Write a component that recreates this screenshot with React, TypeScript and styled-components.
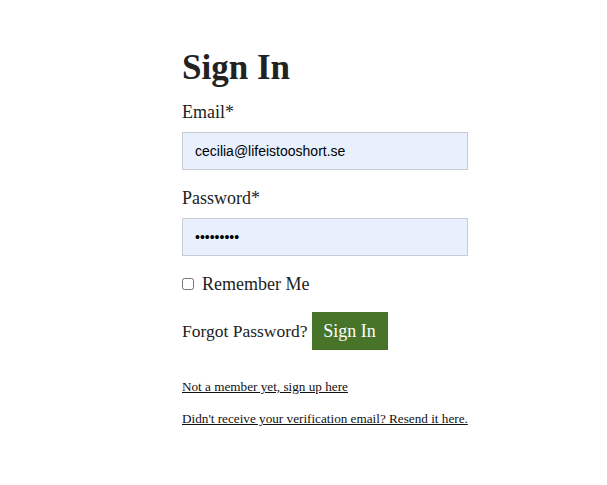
import React from "react";
import styled, { createGlobalStyle } from "styled-components";

const Global = createGlobalStyle`
  html, body { margin: 0; padding: 0; background: #fff; }
  body { font-family: "Liberation Serif", "DejaVu Serif", serif; color: #222; }
`;

const Page = styled.div`
  padding: 46px 0 0 182px;
`;

const Form = styled.form`
  width: 286px;
  display: flex;
  flex-direction: column;
`;

const Title = styled.h1`
  margin: 0 0 11px;
  font-size: 35px;
  font-weight: 700;
  line-height: 44px;
  color: #222;
`;

const Label = styled.label`
  font-size: 18px;
  line-height: 22px;
  margin-bottom: 9px;
  color: #222;
`;

const Input = styled.input`
  box-sizing: border-box;
  width: 286px;
  height: 38px;
  padding: 0 12px;
  border: 1px solid #c9ccd4;
  background: #e8f0fe;
  font-family: "Liberation Sans", Arial, sans-serif;
  font-size: 14px;
  color: #000;
  margin-bottom: 17px;
  outline: none;
`;

const CheckRow = styled.label`
  display: flex;
  align-items: center;
  gap: 8px;
  font-size: 18px;
  line-height: 22px;
  margin-top: 0;
`;

const Box = styled.input`
  margin: 0;
  width: 12px;
  height: 12px;
`;

const ActionRow = styled.div`
  display: flex;
  align-items: center;
  gap: 4px;
  margin-top: 17px;
  font-size: 17.5px;
`;

const Button = styled.button`
  background: #477429;
  color: #fff;
  border: none;
  width: 76px;
  height: 38px;
  font-family: inherit;
  font-size: 18px;
  padding: 0;
`;

const LinkLine = styled.a<{ $top: number }>`
  display: block;
  margin-top: ${(p) => p.$top}px;
  font-size: 13.2px;
  line-height: 18px;
  white-space: nowrap;
  color: #111;
  text-decoration: underline;
`;

export default function App() {
  return (
    <>
      <Global />
      <Page>
        <Form onSubmit={(e) => e.preventDefault()}>
          <Title>Sign In</Title>
          <Label htmlFor="email">Email*</Label>
          <Input id="email" type="email" defaultValue="cecilia@lifeistooshort.se" />
          <Label htmlFor="pw">Password*</Label>
          <Input id="pw" type="password" defaultValue="password1" />
          <CheckRow>
            <Box type="checkbox" />
            Remember Me
          </CheckRow>
          <ActionRow>
            <span>Forgot Password?</span>
            <Button type="submit">Sign In</Button>
          </ActionRow>
          <LinkLine href="#" $top={28}>Not a member yet, sign up here</LinkLine>
          <LinkLine href="#" $top={14}>Didn't receive your verification email? Resend it here.</LinkLine>
        </Form>
      </Page>
    </>
  );
}
